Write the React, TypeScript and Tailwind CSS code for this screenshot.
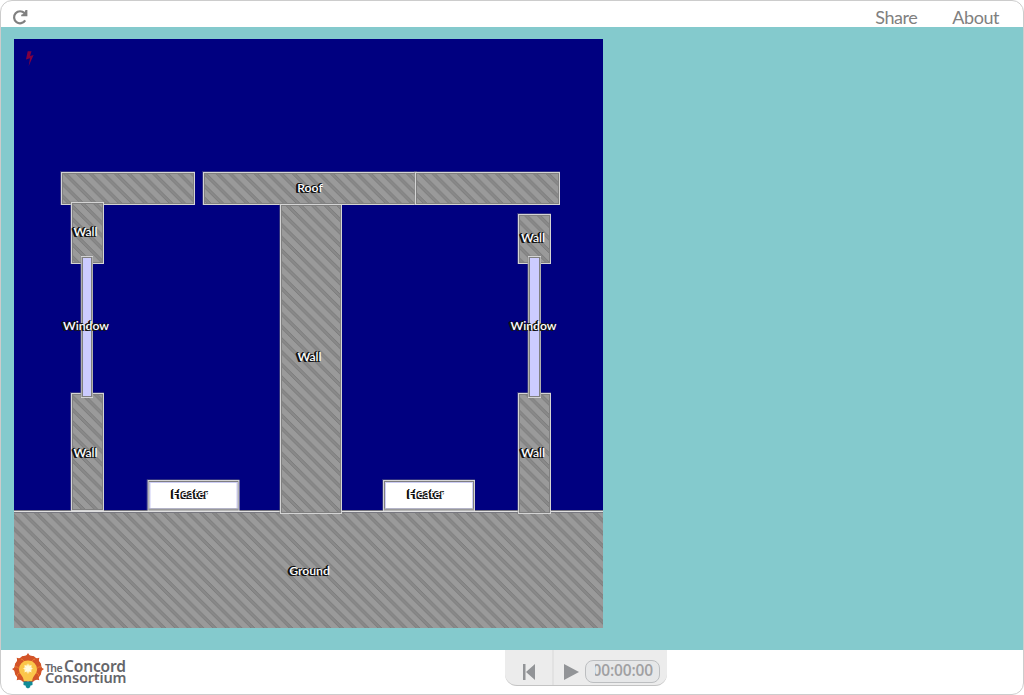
const hatch = 'url(#hatch)';

type Box = { x: number; y: number; w: number; h: number };

const solids: Box[] = [
  { x: 47, y: 133, w: 133, h: 32 },
  { x: 189, y: 133, w: 213, h: 32 },
  { x: 401, y: 133, w: 144, h: 32 },
  { x: 266, y: 165, w: 61, h: 309 },
  { x: 57, y: 163, w: 32, h: 61 },
  { x: 504, y: 175, w: 32, h: 49 },
  { x: 57, y: 354, w: 32, h: 117 },
  { x: 504, y: 354, w: 32, h: 120 },
];

const windows: Box[] = [
  { x: 67, y: 217, w: 11, h: 141 },
  { x: 514, y: 217, w: 12, h: 141 },
];

const heaters: Box[] = [
  { x: 133.5, y: 441, w: 91, h: 30 },
  { x: 369, y: 441, w: 91, h: 30 },
];

const labels = [
  { text: 'Roof', x: 296, y: 148.5 },
  { text: 'Wall', x: 71.5, y: 192.5 },
  { text: 'Wall', x: 519, y: 198.5 },
  { text: 'Window', x: 72, y: 286.5 },
  { text: 'Window', x: 519.5, y: 286.5 },
  { text: 'Wall', x: 295.5, y: 317.5 },
  { text: 'Wall', x: 71.5, y: 413.5 },
  { text: 'Wall', x: 519, y: 413.5 },
  { text: 'Heater', x: 176.5, y: 454.5 },
  { text: 'Heater', x: 412.5, y: 454.5 },
  { text: 'Ground', x: 295.5, y: 531.5 },
];

function Part({ b, fill }: { b: Box; fill: string }) {
  return (
    <g fill="none">
      <rect x={b.x + 0.5} y={b.y + 0.5} width={b.w} height={b.h} fill={fill} stroke="#d4d4d4" />
      <rect x={b.x + 1.5} y={b.y + 1.5} width={b.w - 2} height={b.h - 2} stroke="#808080" />
      <path d={`M${b.x - 0.5} ${b.y + b.h + 1}V${b.y - 0.5}H${b.x + b.w + 1}`} stroke="#888" strokeOpacity="0.35" />
    </g>
  );
}

function Scene() {
  return (
    <div className="relative h-[589px] w-[589px] overflow-hidden bg-[#000080]">
      <svg width="589" height="589" viewBox="0 0 589 589" className="block">
        <defs>
          <pattern id="hatch" width="12.7" height="12.7" patternUnits="userSpaceOnUse" patternTransform="translate(5.5 0)">
            <rect width="12.7" height="12.7" fill="#9a9a9a" />
            <g stroke="#8a8a8a" strokeWidth="2.6">
              <path d="M-12.7-12.7 25.4 25.4M-25.4-12.7 12.7 25.4M0-12.7 38.1 25.4" />
            </g>
            <g stroke="#767676" strokeWidth="0.9">
              <path d="M-14.5-12.7 23.6 25.4M-27.2-12.7 10.9 25.4M-1.8-12.7 36.3 25.4" />
              <path d="M-10.9-12.7 27.2 25.4M-23.6-12.7 14.5 25.4M1.8-12.7 39.9 25.4" />
            </g>
          </pattern>
        </defs>
        <g>
          <rect x="0" y="473" width="589" height="116" fill={hatch} />
          <path d="M0 471.5H589M0 473.5H589" stroke="#77777f" />
          <path d="M0 472.5H589" stroke="#e0e0e0" />
        </g>
        {solids.map((b, i) => <Part key={i} b={b} fill={hatch} />)}
        {windows.map((b, i) => (
          <g key={i}>
            <Part b={b} fill="#ccccff" />
            <path d={`M${b.x + 0.5} ${b.y + 1}V${b.y + b.h}M${b.x + b.w + 0.5} ${b.y + 1}V${b.y + b.h}`} stroke="#b0b0b0" />
          </g>
        ))}
        {heaters.map((b, i) => (
          <g key={i} fill="none">
            <Part b={b} fill="#fff" />
            <rect x={b.x + 2.5} y={b.y + 2.5} width={b.w - 4} height={b.h - 4} stroke="#ccccf5" />
            <path d={`M${b.x + 1} ${b.y + b.h - 0.5}h${b.w - 1}`} stroke="#999" strokeWidth="2" />
          </g>
        ))}
        <path d="M13.7 12.2h3.800l-1.400 4.800 3.500-.9-4.900 10.900 1.300-7.700-4 1.100z" fill="#800040" />
      </svg>
      {labels.map((l, i) => (
        <span
          key={i}
          className="absolute -translate-x-1/2 -translate-y-1/2 whitespace-nowrap text-[12.2px] font-semibold leading-4 text-white [text-shadow:-1px_-1px_0_#111,-1px_0_0_#111,-1px_1px_0_#111,-2px_0_0_#111,-2px_1px_0_#222]"
          style={{ left: l.x, top: l.y }}
        >
          {l.text}
        </span>
      ))}
    </div>
  );
}

function Logo() {
  return (
    <div className="flex items-start gap-[1px]">
      <svg width="32" height="37" viewBox="0 0 32 37">
        <g fill="#d35428">
          {[-135, -90, -45, 0, 45, 90, 135].map((a) => (
            <path key={a} d="M16 16 7 8Q8.500 2.500 12.500 3.200Q15 2.500 16 0Q17 2.500 19.500 3.200Q23.500 2.500 25 8Z" transform={`rotate(${a} 16 16)`} />
          ))}
        </g>
        <g fill="none" stroke="#ef8430" strokeWidth="0.9">
          <path d="M9 6q4 1 3 5M23 6q-4 1-3 5M3 14q4-1 5 4M29 14q-4-1-5 4M5 23q1-4 5-3M27 23q-1-4-5-3" />
        </g>
        <path d="M16 7.500a8.800 8.800 0 0 0-9 8.700c0 5 4.400 6.300 4.800 11.800h8.400c.4-5.500 4.800-6.800 4.800-11.800a8.800 8.800 0 0 0-9-8.700z" fill="#fbc64a" />
        <circle cx="16" cy="15.500" r="4" fill="#ffe99b" />
        <path d="m16 10 .8 3.500 3-1.500-1.500 3 3.200.5-3.200 1 1.500 3-3-1.500-.8 3.500-.8-3.500-3 1.500 1.500-3-3.200-1 3.200-.5-1.500-3 3 1.500z" fill="#fffbe2" />
        <path d="M11.500 28.500h9v3.500l-2.300.8v1.500l-2.200 1.200-2.200-1.200v-1.500l-2.300-.8z" fill="#128b96" />
      </svg>
      <div className="mt-[7px] font-['Noto_Sans'] font-semibold text-[#65666a]">
        <div className="flex h-[12px] items-baseline gap-[2px] whitespace-nowrap leading-[12px]">
          <span className="text-[10.5px] tracking-[-0.600px]">The</span>
          <span className="text-[15.500px] tracking-[-0.150px]">Concord</span>
        </div>
        <div className="h-[11px] text-[14.500px] leading-[11px] tracking-[-0.180px]">Consortium</div>
      </div>
    </div>
  );
}

export default function App() {
  return (
    <div className="h-[695px] w-[1024px] bg-white font-[Lato,sans-serif]">
      <div className="flex h-full flex-col overflow-hidden rounded-[12px] border border-[#cccccc] bg-white">
        <header className="flex h-[26px] shrink-0 items-start justify-between pl-[11px] pr-[24px] text-[#808080]">
          <svg className="mt-[8px]" width="17" height="16" viewBox="0 0 17 16" fill="none">
            <path d="M13.200 11.400A6 6 0 1 1 12.500 4.200" stroke="#808080" strokeWidth="2.200" />
            <path d="M15.400 1V7.200H9.200V5.700l2.500-1L13.500 1z" fill="#808080" />
          </svg>
          <nav className="mt-[4px] flex gap-[35px] text-[18px] leading-[24px] tracking-[-0.450px]">
            <span>Share</span>
            <span>About</span>
          </nav>
        </header>
        <main className="flex h-[623px] shrink-0 items-start bg-[#84cacd] pl-[13px] pt-[12px]">
          <Scene />
        </main>
        <footer className="flex flex-1 items-start">
          <div className="w-[504px] pl-[11px] pt-[3px]">
            <Logo />
          </div>
          <div className="flex h-[36px] w-[162px] items-stretch overflow-hidden rounded-b-[12px] border-b border-[#c3c3c3] bg-[#ececec]">
            <div className="flex w-[49px] items-center justify-center border-r-2 border-[#e2e2e2] pt-[9px]">
              <svg width="12" height="16" viewBox="0 0 12 16" fill="#929497">
                <path d="M0 0h2.500v16H0zM12 0v16L3 8z" />
              </svg>
            </div>
            <div className="flex items-start pl-[10px]">
              <svg className="mt-[14px]" width="15" height="16" viewBox="0 0 15 16" fill="#929497">
                <path d="M0 0v16l15-8z" />
              </svg>
              <div className="ml-[6px] mt-[10px] flex h-[23px] w-[75px] justify-end rounded-[8px] border border-[#bcbec0] bg-[#e6e7e8] pr-[6px]">
                <div className="flex h-[20px] w-[58px] justify-end overflow-hidden">
                  <span className="font-['Open_Sans'] text-[15.500px] font-semibold leading-[18px] tracking-[-0.150px] text-[#a0a0a2]">00:00:00</span>
                </div>
              </div>
            </div>
          </div>
        </footer>
      </div>
    </div>
  );
}
